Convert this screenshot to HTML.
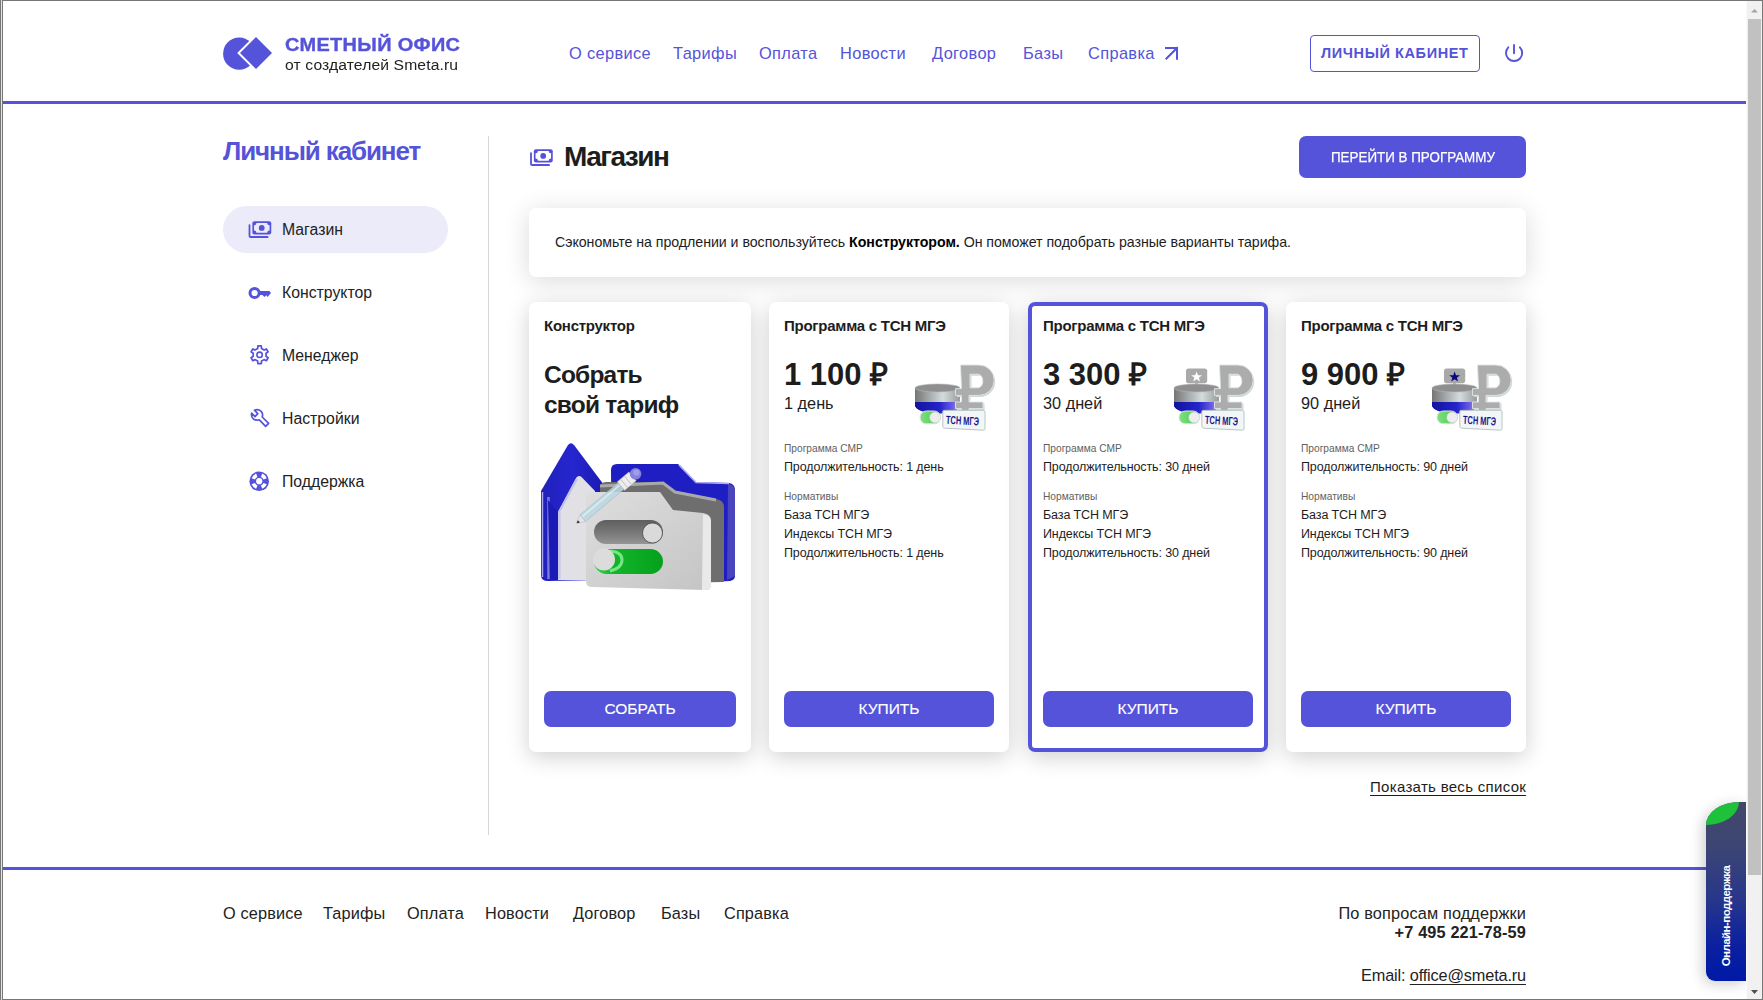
<!DOCTYPE html>
<html lang="ru">
<head>
<meta charset="utf-8">
<title>Магазин — Сметный офис</title>
<style>
*{box-sizing:border-box;margin:0;padding:0}
html,body{width:1763px;height:1000px;overflow:hidden;background:#fff}
body{font-family:"Liberation Sans",sans-serif;color:#212121;position:relative}
.a{position:absolute;white-space:nowrap;line-height:1}
.blue{color:#5553d9}
/* frame */
.fr{position:absolute;background:#777}
/* header */
.hline{position:absolute;left:3px;top:101px;width:1743px;height:3px;background:#5553d9}
.fline{position:absolute;left:3px;top:867px;width:1743px;height:3px;background:#5553d9}
.nav{font-size:16.4px;color:#5553d9;letter-spacing:0.35px}
.card{position:absolute;top:302px;height:450px;background:#fff;border-radius:7px;box-shadow:0 5px 22px rgba(0,0,0,.19)}
.card.sel{box-shadow:0 5px 22px rgba(0,0,0,.19), inset 0 0 0 4px #5553d9}
.btn{position:absolute;top:389px;height:36px;left:15px;right:15px;background:#5553d9;border-radius:7px;color:#fff;font-size:15.5px;text-align:center;line-height:35px;letter-spacing:0px;-webkit-text-stroke:0.12px #fff}
.ct{font-size:15px;font-weight:700;color:#1d1d1d;letter-spacing:-0.25px}
.price{font-size:31px;font-weight:700;color:#1d1d1d}
.days{font-size:16.3px;color:#1d1d1d}
.lab{font-size:10.2px;color:#5f5f5f}
.ln{font-size:12.5px;color:#1d1d1d;letter-spacing:-0.12px}
.side{font-size:15.8px;color:#222}
.foot{font-size:16.3px;color:#222;letter-spacing:0.15px}
</style>
</head>
<body>

<!-- HEADER -->
<svg class="a" style="left:220px;top:34px" width="56" height="40" viewBox="220 34 56 40">
  <defs><mask id="lm"><rect x="220" y="34" width="56" height="40" fill="#fff"/><path d="M256,34.2 L274.8,53 L256,71.8 L237.2,53 Z" fill="#000"/></mask></defs>
  <circle cx="239.2" cy="53.7" r="16.1" fill="#5553d9" mask="url(#lm)"/>
  <path d="M256,37 L272,53 L256,69 L240,53 Z" fill="#5553d9"/>
</svg>
<div class="a blue" id="logo1" style="left:285px;top:36px;font-size:18.4px;font-weight:700;letter-spacing:0.3px;-webkit-text-stroke:0.35px #5553d9;transform:scaleX(1.085);transform-origin:0 0">СМЕТНЫЙ ОФИС</div>
<div class="a" id="logo2" style="left:285px;top:58px;font-size:14px;letter-spacing:0.1px;color:#222;transform:scaleX(1.12);transform-origin:0 0">от создателей Smeta.ru</div>

<div class="a nav" style="left:569px;top:45px">О сервисе</div>
<div class="a nav" style="left:673px;top:45px">Тарифы</div>
<div class="a nav" style="left:759px;top:45px">Оплата</div>
<div class="a nav" style="left:840px;top:45px">Новости</div>
<div class="a nav" style="left:932px;top:45px">Договор</div>
<div class="a nav" style="left:1023px;top:45px">Базы</div>
<div class="a nav" style="left:1088px;top:45px">Справка</div>
<svg class="a" style="left:1160px;top:40px" width="25" height="25" viewBox="0 0 25 25"><path d="M6 8 H17 V18.7 M17 8 L6.4 18.6" stroke="#5553d9" stroke-width="2" fill="none" stroke-linecap="square"/></svg>

<div class="a" style="left:1310px;top:35px;width:170px;height:37px;border:1.5px solid #5553d9;border-radius:4px"></div>
<div class="a blue" style="left:1321px;top:46px;font-size:14.5px;font-weight:700;letter-spacing:0.6px">ЛИЧНЫЙ КАБИНЕТ</div>
<svg class="a" style="left:1500px;top:38px" width="30" height="30" viewBox="0 0 30 30"><path d="M8.3 9.3 A8.1 8.1 0 1 0 19.9 9.3" stroke="#5553d9" stroke-width="1.9" fill="none" stroke-linecap="round"/><path d="M14 7 V15.3" stroke="#5553d9" stroke-width="1.9" stroke-linecap="round"/></svg>

<div class="hline"></div>

<!-- SIDEBAR -->
<div class="a blue" style="left:223px;top:138px;font-size:26px;font-weight:700;letter-spacing:-1.1px">Личный кабинет</div>
<div class="a" style="left:223px;top:206px;width:225px;height:47px;background:#ecebfa;border-radius:24px"></div>
<div class="a side" style="left:282px;top:222px">Магазин</div>
<div class="a side" style="left:282px;top:285px">Конструктор</div>
<div class="a side" style="left:282px;top:348px">Менеджер</div>
<div class="a side" style="left:282px;top:411px">Настройки</div>
<div class="a side" style="left:282px;top:474px">Поддержка</div>
<div class="a" style="left:488px;top:136px;width:1px;height:699px;background:#d6d6d6"></div>

<!-- MAIN -->
<div class="a" style="left:564px;top:143px;font-size:28px;font-weight:700;letter-spacing:-1.5px;color:#1d1d1d">Магазин</div>
<div class="a" style="left:1299px;top:136px;width:227px;height:42px;background:#5553d9;border-radius:7px"></div>
<div class="a" style="left:1331px;top:150px;font-size:14.8px;color:#fff;letter-spacing:0px;-webkit-text-stroke:0.25px #fff;transform:scaleX(0.905);transform-origin:0 0">ПЕРЕЙТИ В ПРОГРАММУ</div>

<div class="a" style="left:529px;top:208px;width:997px;height:69px;background:#fff;border-radius:7px;box-shadow:0 4px 26px rgba(0,0,0,.15)"></div>
<div class="a" style="left:555px;top:235px;font-size:14.2px;color:#1d1d1d;letter-spacing:-0.04px">Сэкономьте на продлении и воспользуйтесь <b style="color:#000">Конструктором.</b> Он поможет подобрать разные варианты тарифа.</div>

<!-- CARDS -->
<div class="card" style="left:529px;width:222px">
  <div class="a ct" style="left:15px;top:16px">Конструктор</div>
  <div class="a" style="left:15px;top:58.4px;font-size:24.5px;font-weight:700;line-height:30px;color:#1d1d1d;letter-spacing:-0.8px">Собрать<br>свой тариф</div>
  <div class="btn">СОБРАТЬ</div>
</div>
<div class="card" style="left:769px;width:240px">
  <div class="a ct" style="left:15px;top:16px">Программа с ТСН МГЭ</div>
  <div class="a price" style="left:15px;top:57.3px">1 100 ₽</div>
  <div class="a days" style="left:15px;top:92.5px">1 день</div>
  <div class="a lab" style="left:15px;top:142px">Программа СМР</div>
  <div class="a ln" style="left:15px;top:159px">Продолжительность: 1 день</div>
  <div class="a lab" style="left:15px;top:190px">Нормативы</div>
  <div class="a ln" style="left:15px;top:207px">База ТСН МГЭ</div>
  <div class="a ln" style="left:15px;top:226px">Индексы ТСН МГЭ</div>
  <div class="a ln" style="left:15px;top:245px">Продолжительность: 1 день</div>
  <div class="btn">КУПИТЬ</div>
</div>
<div class="card sel" style="left:1028px;width:240px">
  <div class="a ct" style="left:15px;top:16px">Программа с ТСН МГЭ</div>
  <div class="a price" style="left:15px;top:57.3px">3 300 ₽</div>
  <div class="a days" style="left:15px;top:92.5px">30 дней</div>
  <div class="a lab" style="left:15px;top:142px">Программа СМР</div>
  <div class="a ln" style="left:15px;top:159px">Продолжительность: 30 дней</div>
  <div class="a lab" style="left:15px;top:190px">Нормативы</div>
  <div class="a ln" style="left:15px;top:207px">База ТСН МГЭ</div>
  <div class="a ln" style="left:15px;top:226px">Индексы ТСН МГЭ</div>
  <div class="a ln" style="left:15px;top:245px">Продолжительность: 30 дней</div>
  <div class="btn">КУПИТЬ</div>
</div>
<div class="card" style="left:1286px;width:240px">
  <div class="a ct" style="left:15px;top:16px">Программа с ТСН МГЭ</div>
  <div class="a price" style="left:15px;top:57.3px">9 900 ₽</div>
  <div class="a days" style="left:15px;top:92.5px">90 дней</div>
  <div class="a lab" style="left:15px;top:142px">Программа СМР</div>
  <div class="a ln" style="left:15px;top:159px">Продолжительность: 90 дней</div>
  <div class="a lab" style="left:15px;top:190px">Нормативы</div>
  <div class="a ln" style="left:15px;top:207px">База ТСН МГЭ</div>
  <div class="a ln" style="left:15px;top:226px">Индексы ТСН МГЭ</div>
  <div class="a ln" style="left:15px;top:245px">Продолжительность: 90 дней</div>
  <div class="btn">КУПИТЬ</div>
</div>

<div class="a" style="left:1370px;top:779px;font-size:15px;color:#1d1d1d;letter-spacing:0.3px;text-decoration:underline;text-underline-offset:3px">Показать весь список</div>

<!-- FOOTER -->
<div class="fline"></div>
<div class="a foot" style="left:223px;top:905px">О сервисе</div>
<div class="a foot" style="left:323px;top:905px">Тарифы</div>
<div class="a foot" style="left:407px;top:905px">Оплата</div>
<div class="a foot" style="left:485px;top:905px">Новости</div>
<div class="a foot" style="left:573px;top:905px">Договор</div>
<div class="a foot" style="left:661px;top:905px">Базы</div>
<div class="a foot" style="left:724px;top:905px">Справка</div>
<div class="a foot" style="right:237px;top:905px;text-align:right">По вопросам поддержки</div>
<div class="a foot" style="right:237px;top:924px;font-weight:700">+7 495 221-78-59</div>
<div class="a foot" style="right:237px;top:967px;letter-spacing:-0.15px">Email: <u style="text-underline-offset:3px">office@smeta.ru</u></div>


<svg class="a" style="left:0;top:0;pointer-events:none" width="1763" height="1000" viewBox="0 0 1763 1000">
<defs>
  <g id="money">
    <rect x="252.35" y="221.25" width="18.9" height="13.3" rx="2" fill="#5553d9"/>
    <path d="M256.45,222.95 H267.15 A2.4,2.4 0 0 0 269.55,225.35 V230.45 A2.4,2.4 0 0 0 267.15,232.85 H256.45 A2.4,2.4 0 0 0 254.05,230.45 V225.35 A2.4,2.4 0 0 0 256.45,222.95 Z" fill="var(--bg)"/>
    <circle cx="261.7" cy="227.9" r="2.9" fill="#5553d9"/>
    <path d="M249.5,225.1 V235.9 Q249.5,237 250.6,237 H267.6" stroke="#5553d9" stroke-width="1.8" fill="none" stroke-linecap="round"/>
  </g>
</defs>
<use href="#money" style="--bg:#ecebfa"/>
<use href="#money" transform="translate(281.5,-72)" style="--bg:#ffffff"/>
<!-- key -->
<circle cx="254.6" cy="293" r="4.6" stroke="#5553d9" stroke-width="3" fill="none"/>
<path d="M258.8,291 H269.4 L271,293 L267.6,297 L266.3,295.2 L264.6,297 L262.4,295 H258.8 Z" fill="#5553d9"/>
<!-- gear -->
<path d="M257.67,348.49 L257.88,345.97 L261.32,345.97 L261.53,348.49 L264.10,349.97 L266.39,348.90 L268.11,351.87 L266.03,353.32 L266.03,356.28 L268.11,357.73 L266.39,360.70 L264.10,359.63 L261.53,361.11 L261.32,363.63 L257.88,363.63 L257.67,361.11 L255.10,359.63 L252.81,360.70 L251.09,357.73 L253.17,356.28 L253.17,353.32 L251.09,351.87 L252.81,348.90 L255.10,349.97 Z" stroke="#5553d9" stroke-width="1.7" fill="none" stroke-linejoin="round"/>
<circle cx="259.6" cy="354.8" r="2.7" stroke="#5553d9" stroke-width="1.6" fill="none"/>
<!-- wrench -->
<path d="M254.4,410.2 L257.8,413.6 L255.0,416.6 L251.6,413.2 C250.6,417.8 254.6,421.4 259.4,419.8 L265.6,426.4 L268.6,423.4 L262.2,417.0 C263.8,412.4 259.8,408.4 254.4,410.2 Z" stroke="#5553d9" stroke-width="1.7" fill="none" stroke-linejoin="round"/>
<!-- lifebuoy -->
<circle cx="259.2" cy="481.2" r="9.8" fill="#5553d9"/>
<path d="M262.27,473.60 A8.2,8.2 0 0 1 266.80,478.13 L263.47,479.48 A4.6,4.6 0 0 0 260.92,476.93 Z" fill="#fff"/><path d="M266.80,484.27 A8.2,8.2 0 0 1 262.27,488.80 L260.92,485.47 A4.6,4.6 0 0 0 263.47,482.92 Z" fill="#fff"/><path d="M256.13,488.80 A8.2,8.2 0 0 1 251.60,484.27 L254.93,482.92 A4.6,4.6 0 0 0 257.48,485.47 Z" fill="#fff"/><path d="M251.60,478.13 A8.2,8.2 0 0 1 256.13,473.60 L257.48,476.93 A4.6,4.6 0 0 0 254.93,479.48 Z" fill="#fff"/><circle cx="259.2" cy="481.2" r="3.1" fill="#fff"/>

<defs>
  <linearGradient id="gblue" x1="0" y1="0" x2="1" y2="0"><stop offset="0" stop-color="#2020b8"/><stop offset=".5" stop-color="#2626d0"/><stop offset="1" stop-color="#1a1ab0"/></linearGradient>
  <linearGradient id="ggrayf" x1="0" y1="0" x2="1" y2="1"><stop offset="0" stop-color="#dedede"/><stop offset="1" stop-color="#c4c4c4"/></linearGradient>
  <linearGradient id="gtrack" x1="0" y1="0" x2="0" y2="1"><stop offset="0" stop-color="#5e5e5e"/><stop offset=".6" stop-color="#7c7c7c"/><stop offset="1" stop-color="#959595"/></linearGradient>
  <linearGradient id="ggreen" x1="0" y1="0" x2="1" y2="0"><stop offset="0" stop-color="#2fd24a"/><stop offset=".3" stop-color="#12b52a"/><stop offset="1" stop-color="#05a01c"/></linearGradient>
  <linearGradient id="gcyl" x1="0" y1="0" x2="1" y2="0"><stop offset="0" stop-color="#757575"/><stop offset=".62" stop-color="#d3dcdc"/><stop offset="1" stop-color="#9a9a9a"/></linearGradient>
  <linearGradient id="gcylb" x1="0" y1="0" x2="1" y2="0"><stop offset="0" stop-color="#12129e"/><stop offset=".55" stop-color="#2424cc"/><stop offset=".85" stop-color="#6f5ee6"/><stop offset="1" stop-color="#b9a0f5"/></linearGradient>
  <linearGradient id="gtog" x1="0" y1="0" x2="1" y2="0"><stop offset="0" stop-color="#7fe080"/><stop offset="1" stop-color="#45c84f"/></linearGradient>
  <g id="rub">
    <ellipse cx="22.5" cy="40" rx="22.5" ry="8.4" fill="#1a1aa8"/>
    <rect x="0" y="36" width="45" height="4" fill="url(#gcylb)"/>
    <path d="M0,38 V40 A22.5,8.4 0 0 0 45,40 V38 Z" fill="url(#gcylb)"/>
    <rect x="0" y="23" width="45" height="14" fill="url(#gcyl)"/>
    <ellipse cx="22.5" cy="23" rx="22.5" ry="4" fill="#8f8f8f" stroke="#b5b5b5" stroke-width=".6"/>
    <path d="M47,1.5 H65 A15.2,15.2 0 0 1 65,31.9 H55.5 V38.5 H69.5 V45.1 H55.5 V47.5 H48 V45.1 H42 V38.5 H48 V31.9 H42 V25.1 H48 Z M56.5,10.7 V24.3 H64.7 A4.6,6.8 0 0 0 64.7,10.7 Z" fill="#cfd8d8" fill-rule="evenodd"/>
    <path d="M45.5,0 H64 A15.2,15.2 0 0 1 64,30.4 H54 V37 H68 V43.6 H54 V46 H46.5 V43.6 H40.5 V37 H46.5 V30.4 H40.5 V23.6 H46.5 Z M55,9.2 V22.8 H63.2 A4.6,6.8 0 0 0 63.2,9.2 Z" fill="#acacac" fill-rule="evenodd" stroke="#dfe6e6" stroke-width=".9"/>
    <rect x="5" y="46" width="20.6" height="12.8" rx="6.4" fill="url(#gtog)" stroke="#e3e3e3" stroke-width="1"/>
    <circle cx="20.2" cy="52.4" r="5.4" fill="#ededed" stroke="#d4d4d4" stroke-width=".6"/>
    <path d="M28.6,45.4 H68.6 Q70,45.4 70,47 V63.6 Q70,65.2 68.6,65.2 L29.8,63.2 Q27.8,63 27.8,61.4 V47 Q27.8,45.4 28.6,45.4 Z" fill="#f3f6f6" stroke="#b8c6c6" stroke-width="1"/>
    <text x="31" y="59.6" font-family="Liberation Sans" font-weight="700" font-size="11.8" fill="#15158a" textLength="33" lengthAdjust="spacingAndGlyphs" transform="rotate(3 47 55)">ТСН МГЭ</text>
  </g>
  <g id="sign">
    <rect x="21.2" y="17" width="2.6" height="5" fill="#b0b0b0"/>
    <rect x="12" y="3.6" width="21.2" height="14.6" rx="2.6" fill="#a9a9a9"/>
  </g>
</defs>
<!-- back blue house -->
<path d="M541,491 L568,445 Q571,441.5 574,445 L604,485 V580 L548,581 Q541,581 541,575 Z" fill="url(#gblue)"/>
<path d="M542.5,492 V577" stroke="#a7a3ee" stroke-width="1.5"/><path d="M548.5,497 V579" stroke="#7d79e0" stroke-width="2.5"/>
<!-- front gray house -->
<path d="M558,512 L576,478 Q578.5,474.5 581.5,477 L595,491 V580 L558,580 Z" fill="#e0e0e5"/><path d="M559,512 L577,479 M559.5,512 V579" stroke="#c3c0ee" stroke-width="2" fill="none"/><path d="M548,500 L558,512 V580 L550,580 Z" fill="#1b1bb5"/>
<path d="M559,513 V579" stroke="#c9c7ec" stroke-width="2"/>
<!-- back blue folder -->
<path d="M611,470 Q611,464 617,464 L678,464 L696,482 L729,483 Q735,484 735,490 V576 Q735,580 730,581 L612,586 Z" fill="#1e1ec2"/>
<path d="M728,484 Q735,485 735,491 V576 L727,580 Z" fill="#4a45bd"/><path d="M679,465 L696,482.5 L729,483.5" stroke="#b0a9f0" stroke-width="1.6" fill="none"/>
<!-- dark gray folder -->
<path d="M600,488 Q600,482 606,482 L663,482 L675,491 L716,499 Q724,500 724,507 V582 L602,584 Z" fill="#6e6e6e"/>
<path d="M600,486 L663,483 L675,492 L716,500" stroke="#a9a9a9" stroke-width="3" fill="none"/>
<!-- front light gray folder -->
<path d="M586,498 Q586,492 592,492 L660,492 L673,510 L703,513 Q711,514 711,521 V585 Q711,590 705,590 L592,587 Q586,587 586,581 Z" fill="url(#ggrayf)"/>
<path d="M703,514 Q711,515 711,522 V586 Q711,590 705,590 L702,590 Z" fill="#e9e9e9"/>
<!-- toggles -->
<rect x="594" y="520" width="69" height="24" rx="12" fill="url(#gtrack)"/>
<circle cx="652.5" cy="533" r="10" fill="#dadada" stroke="#4a4a4a" stroke-width=".8"/>
<rect x="594" y="549" width="69" height="25" rx="12.5" fill="url(#ggreen)"/>
<path d="M610,551 Q622,552 622,560 Q622,568 610,571" stroke="#8ff29a" stroke-width="3" fill="none" opacity=".8"/>
<circle cx="604" cy="559.5" r="11" fill="#dcdcdc"/>
<!-- pencil -->
<path d="M585.49,521.45 L623.79,489.30 L618.26,482.71 L579.96,514.86 Z" fill="#bcd8e2" stroke="#9fbcc6" stroke-width=".8" opacity=".85"/>
<path d="M582.53,516.36 L619.30,485.50" stroke="#e3f1f5" stroke-width="1.6" opacity=".8"/>
<path d="M576.60,523.30 L585.49,521.45 L579.96,514.86 Z" fill="#e4e4e8" stroke="#b4b4b4" stroke-width=".5"/>
<path d="M576.60,523.30 L579.93,522.60 L577.87,520.15 Z" fill="#2a2a2a"/>
<path d="M624.63,490.30 L636.12,480.65 L628.92,472.07 L617.43,481.72 Z" fill="#ededed" stroke="#c2c2c2" stroke-width=".6"/>
<path d="M627.69,487.72 L620.49,479.14 M631.52,484.51 L624.32,475.93" stroke="#c0c0c0" stroke-width="1"/>
<circle cx="635.58" cy="473.79" r="5.8" fill="#8581dc"/>
<circle cx="636.38" cy="472.59" r="3.2" fill="#9f9cea"/>
<!-- ruble illustrations -->
<use href="#rub" transform="translate(915,365)"/>
<use href="#sign" transform="translate(1174,365)"/>
<path d="M1196.6,371.4 L1198,375.2 L1202,375.3 L1198.9,377.7 L1200,381.6 L1196.6,379.3 L1193.2,381.6 L1194.3,377.7 L1191.2,375.3 L1195.2,375.2 Z" fill="#fff"/>
<use href="#rub" transform="translate(1174,365)"/>
<use href="#sign" transform="translate(1432,365)"/>
<path d="M1454.6,371.4 L1456,375.2 L1460,375.3 L1456.9,377.7 L1458,381.6 L1454.6,379.3 L1451.2,381.6 L1452.3,377.7 L1449.2,375.3 L1453.2,375.2 Z" fill="#0a0a80"/>
<use href="#rub" transform="translate(1432,365)"/>
</svg>

<!-- WIDGET -->
<div class="a" style="left:1706px;top:802px;width:40px;height:179px;border-radius:33px 0 0 9px / 23px 0 0 9px;background:linear-gradient(#434869 0%,#3c4574 25%,#27368c 55%,#0a20a0 80%,#0019a6 100%);box-shadow:-3px 3px 14px rgba(0,0,0,.2);overflow:hidden">
  <svg style="position:absolute;left:0;top:0" width="40" height="30" viewBox="1706 802 40 30"><path d="M1706,825 A33,23 0 0 1 1739,802 A33,23 0 0 1 1706,825 Z" fill="#1dc23a"/></svg>
  <div style="position:absolute;left:20.5px;top:114px;transform:translate(-50%,-50%) rotate(-90deg);font-size:11.5px;font-weight:700;letter-spacing:-0.55px;color:#fff;white-space:nowrap">Онлайн-поддержка</div>
</div>

<!-- SCROLLBAR -->
<div class="a" style="left:1746px;top:0;width:17px;height:1000px;background:#f1f1f1;border-left:1px solid #fafafa"></div>
<div class="a" style="left:1748px;top:19px;width:13px;height:856px;background:#c1c1c1"></div>
<svg class="a" style="left:1746px;top:0" width="17" height="17"><path d="M5 12.5 L8.5 9 L12 12.5 Z" fill="#a3a3a3"/></svg>
<svg class="a" style="left:1746px;top:983px" width="17" height="17"><path d="M5 7 L12 7 L8.5 11 Z" fill="#505050"/></svg>

<!-- FRAME -->
<div class="fr" style="left:0;top:0;width:1763px;height:1px"></div>
<div class="fr" style="left:0;top:999px;width:1763px;height:1px"></div>
<div class="fr" style="left:0;top:0;width:1px;height:1000px"></div>
<div class="a" style="left:1px;top:0;width:1px;height:1000px;background:#e1e3e6"></div>
<div class="fr" style="left:2px;top:0;width:1px;height:1000px"></div>
<div class="fr" style="left:1762px;top:0;width:1px;height:1000px"></div>

</body>
</html>
